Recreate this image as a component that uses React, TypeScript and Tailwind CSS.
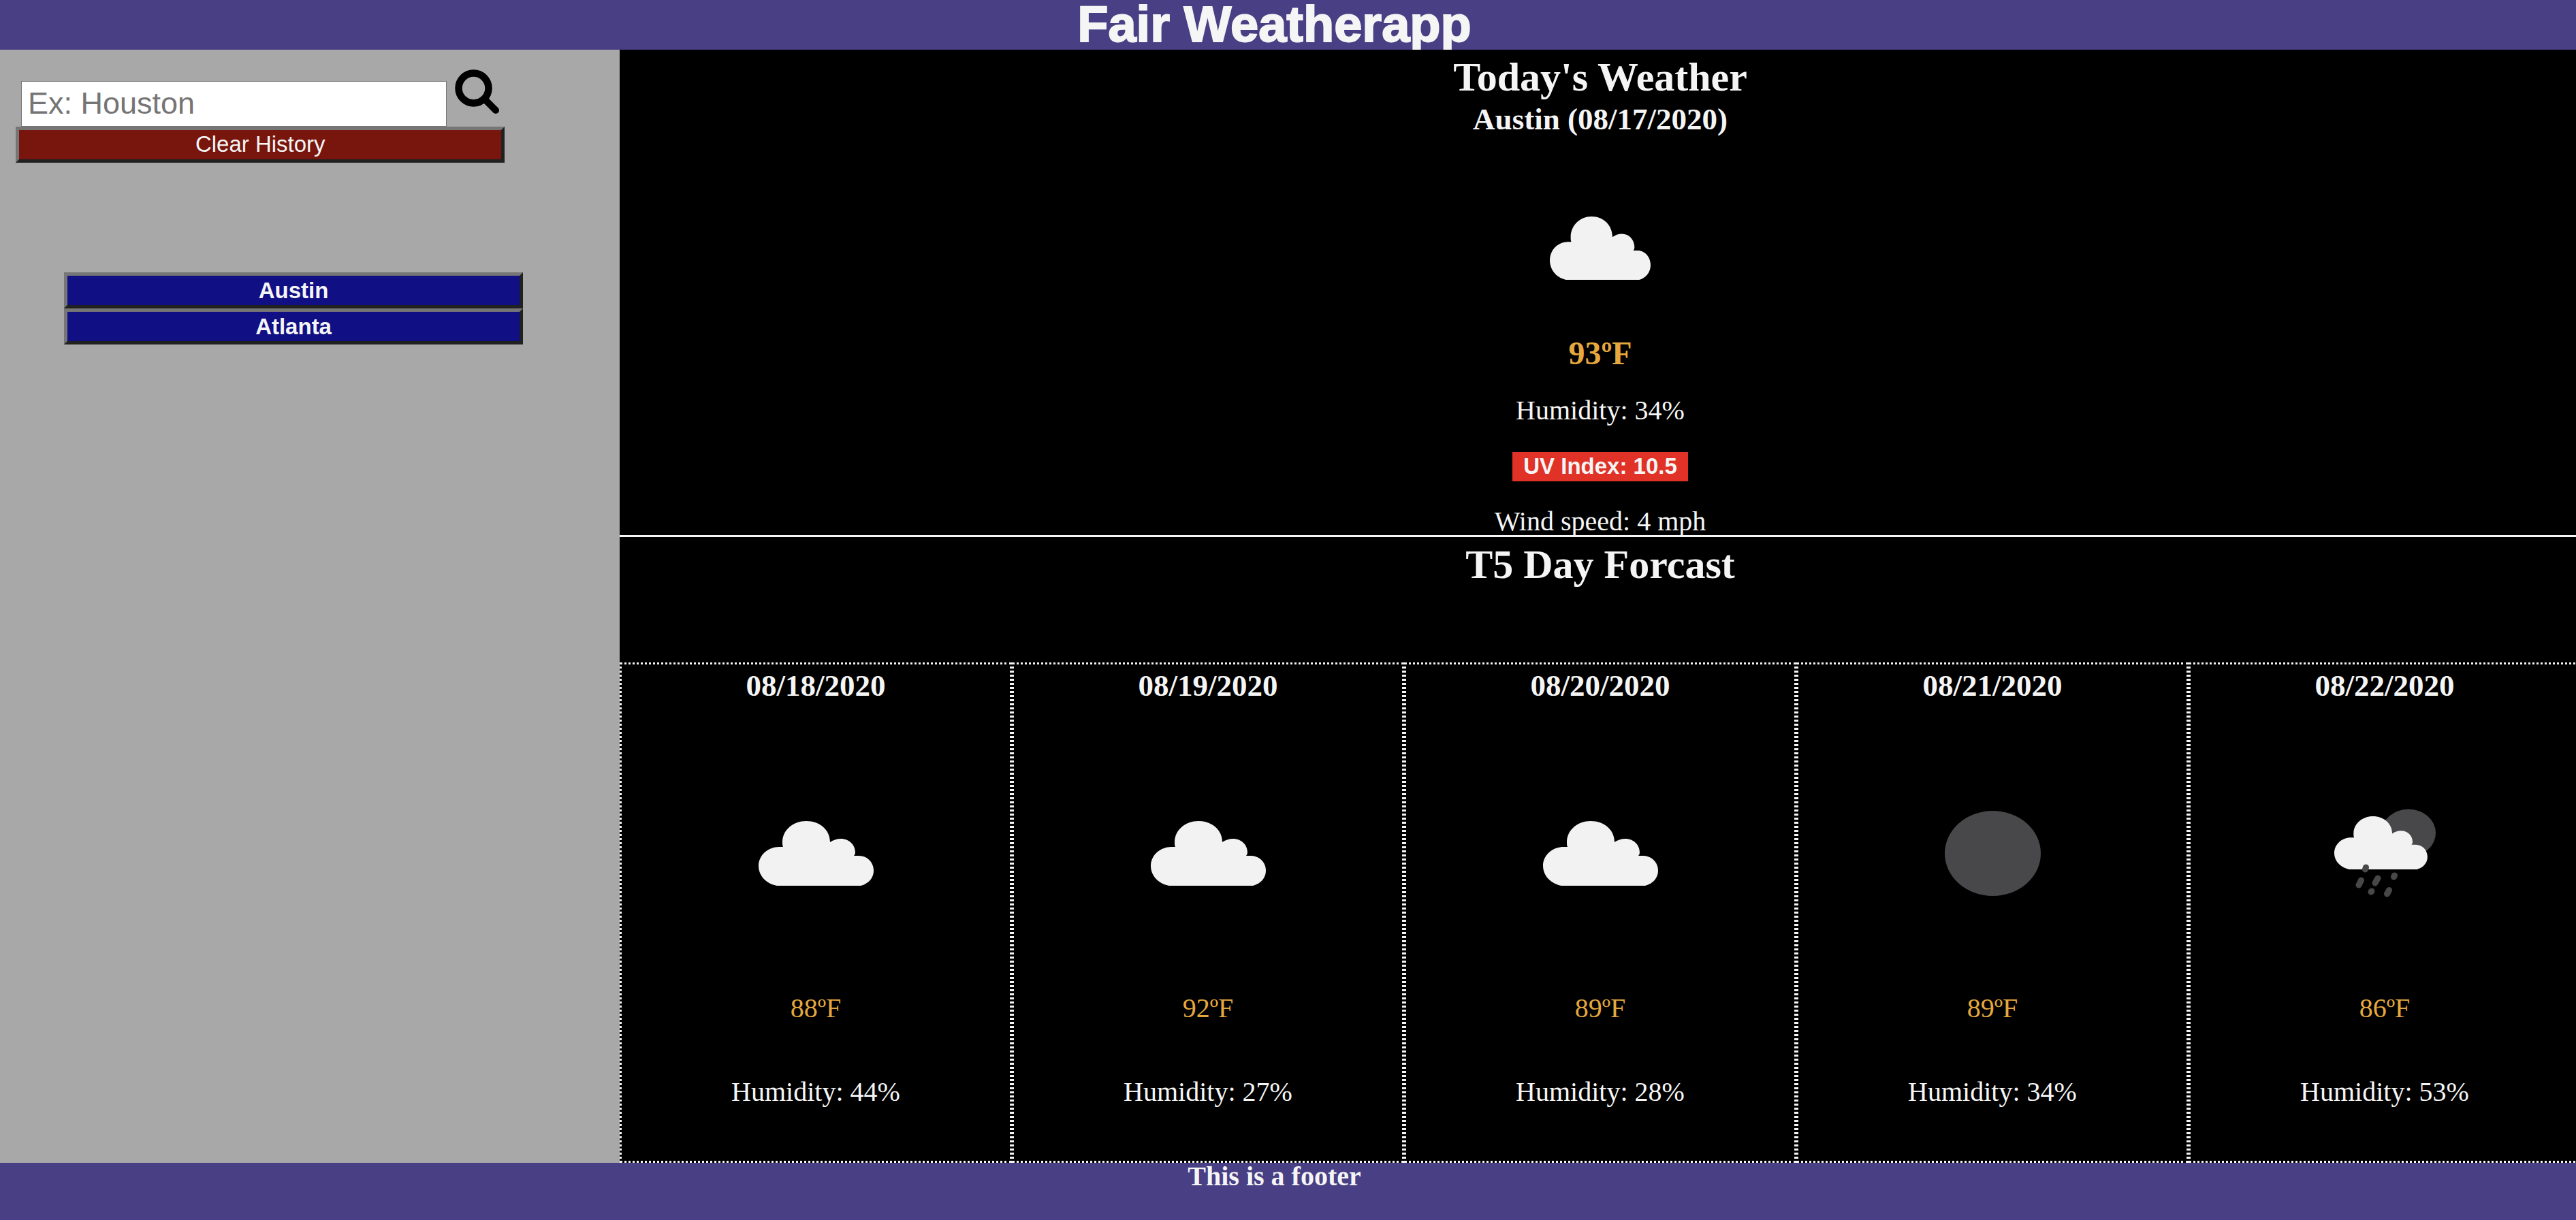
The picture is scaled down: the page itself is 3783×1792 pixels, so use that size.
type Sky = "cloud" | "moon" | "rain";

const CLOUD_PATH =
  "M27 95 C11 92 0 80 0 66 C0 50 14 38 30 38 L36 38 C35 36 35 34 35 31 C35 13 51 0 70 0 C90 0 105 13 105 31 C109 28 115 26 121 26 C133 26 142 35 142 46 Q142 49 140 51 L147 51 C160 51 169 61 169 73 C169 83 162 92 150 95 Z";

function Cloud({ className }: { className: string }) {
  return (
    <svg viewBox="0 0 169 95" preserveAspectRatio="none" className={className} aria-hidden="true">
      <path d={CLOUD_PATH} fill="#f2f2f2" />
    </svg>
  );
}

function Moon() {
  return (
    <svg viewBox="0 0 141 125" className="h-[125px] w-[141px]" aria-hidden="true">
      <ellipse cx="70.5" cy="62.5" rx="70.5" ry="62.5" fill="#48484a" />
    </svg>
  );
}

function NightRain() {
  return (
    <svg viewBox="0 0 155 133" className="h-[133px] w-[155px]" aria-hidden="true">
      <ellipse cx="112" cy="36.5" rx="40" ry="35" fill="#48484a" />
      <path d={CLOUD_PATH} fill="#f2f2f2" transform="translate(3 12) scale(0.81 0.82)" />
      <g stroke="#48484a" strokeWidth="9" strokeLinecap="round">
        <path d="M49.5 87 L48.5 90" />
        <path d="M42.5 106 L39 113" />
        <path d="M67 103 L63 110" />
        <path d="M91.5 99 L90.5 101" />
        <path d="M58 122 L57 123" />
        <path d="M83.5 120.5 L80.5 126" />
      </g>
    </svg>
  );
}

function SkyIcon({ sky }: { sky: Sky }) {
  if (sky === "moon") return <Moon />;
  if (sky === "rain") return <NightRain />;
  return <Cloud className="h-[95px] w-[169px]" />;
}

const cities = ["Austin", "Atlanta"];

const forecast: { date: string; sky: Sky; temp: number; humidity: number }[] = [
  { date: "08/18/2020", sky: "cloud", temp: 88, humidity: 44 },
  { date: "08/19/2020", sky: "cloud", temp: 92, humidity: 27 },
  { date: "08/20/2020", sky: "cloud", temp: 89, humidity: 28 },
  { date: "08/21/2020", sky: "moon", temp: 89, humidity: 34 },
  { date: "08/22/2020", sky: "rain", temp: 86, humidity: 53 },
];

function Sidebar() {
  return (
    <aside className="bg-[#a8a8a8] pt-[29px] pl-[23px] font-['Liberation_Sans',Arial,sans-serif]">
      <form className="flex w-[81%] items-start px-2" onSubmit={(e) => e.preventDefault()}>
        <input
          type="text"
          aria-label="City"
          placeholder="Ex: Houston"
          className="mt-[17px] h-[67px] min-w-0 flex-1 border border-[#767676] bg-white px-[9px] pb-0.5 text-[45px] text-black placeholder:text-[#757575]"
        />
        <button type="submit" aria-label="Search" className="ml-3 block">
          <svg viewBox="0 0 65 65" className="block size-[65px]" fill="none" stroke="#000" aria-hidden="true">
            <circle cx="27.5" cy="27.5" r="22" strokeWidth="10.5" />
            <path d="M44 44 L60 60" strokeWidth="10" strokeLinecap="round" />
          </svg>
        </button>
      </form>
      <button
        type="button"
        className="block h-[53px] w-[81%] border-5 border-t-[#767676] border-r-[#212121] border-b-[#212121] border-l-[#767676] bg-[#78150d] pb-0.5 text-[33px] leading-[42px] text-[#f5f5f5]"
      >
        Clear History
      </button>
      <ul className="mt-[161px] ml-[71px] w-[76%]">
        {cities.map((city) => (
          <li key={city}>
            <button
              type="button"
              className="block h-[53px] w-full border-5 border-t-[#767676] border-r-[#212121] border-b-[#212121] border-l-[#767676] bg-[#110f84] text-[33px] leading-[42px] font-bold text-[#f5f5f5]"
            >
              {city}
            </button>
          </li>
        ))}
      </ul>
    </aside>
  );
}

function Today() {
  return (
    <section className="flex flex-col items-center">
      <h2 className="text-[60px] leading-[80px] font-bold">Today's Weather</h2>
      <h3 className="text-[45px] leading-[44px] font-bold">Austin (08/17/2020)</h3>
      <Cloud className="mt-[121px] h-[93px] w-[148px]" />
      <p className="mt-20 text-[48px] leading-[56px] font-bold text-[#e6a83e]">93ºF</p>
      <p className="mt-[33px] text-[40px] leading-[46px]">Humidity: 34%</p>
      <button
        type="button"
        className="mt-[38px] bg-[#e03226] px-4 pb-px font-['Liberation_Sans',Arial,sans-serif] text-[33px] leading-[42px] font-bold"
      >
        UV Index: 10.5
      </button>
      <p className="mt-9 -mb-[3px] text-[40px] leading-[46px]">Wind speed: 4 mph</p>
    </section>
  );
}

function Forecast() {
  return (
    <section className="relative flex flex-1 flex-col border-t-3 border-[#f5f5f5] bg-black">
      <h2 className="text-center text-[60px] leading-[80px] font-bold">T5 Day Forcast</h2>
      <div className="mt-[104px] grid flex-1 grid-cols-5">
        {forecast.map((day) => (
          <article
            key={day.date}
            className="flex flex-col items-center border-3 border-dotted border-[#f5f5f5] pb-[78px] text-[40px] leading-[46px]"
          >
            <h3 className="text-[45px] leading-[62px] font-bold">{day.date}</h3>
            <div className="mt-[149px] flex h-[133px] items-center">
              <SkyIcon sky={day.sky} />
            </div>
            <p className="mt-[138px] text-[#e6a83e]">{day.temp}ºF</p>
            <p className="mt-[77px]">Humidity: {day.humidity}%</p>
          </article>
        ))}
      </div>
    </section>
  );
}

export default function App() {
  return (
    <div className="flex min-h-screen flex-col bg-black font-['Liberation_Serif','Times_New_Roman',serif] text-[#f5f5f5]">
      <header className="bg-[#483f85] pr-10 pb-px text-center">
        <h1 className="font-['Liberation_Sans',Arial,sans-serif] text-[74px] leading-[72px] font-bold [-webkit-text-stroke:2px_#f5f5f5]">
          Fair Weatherapp
        </h1>
      </header>
      <div className="relative grid flex-1 grid-cols-[910fr_2873fr]">
        <Sidebar />
        <main className="flex min-w-0 overflow-hidden bg-black">
          <div className="-mr-[7px] flex flex-1 flex-col">
            <Today />
            <Forecast />
          </div>
        </main>
      </div>
      <footer className="bg-[#483f85] pr-10 pb-11 text-center">
        <p className="text-[40px] leading-[40px] font-bold">This is a footer</p>
      </footer>
    </div>
  );
}
